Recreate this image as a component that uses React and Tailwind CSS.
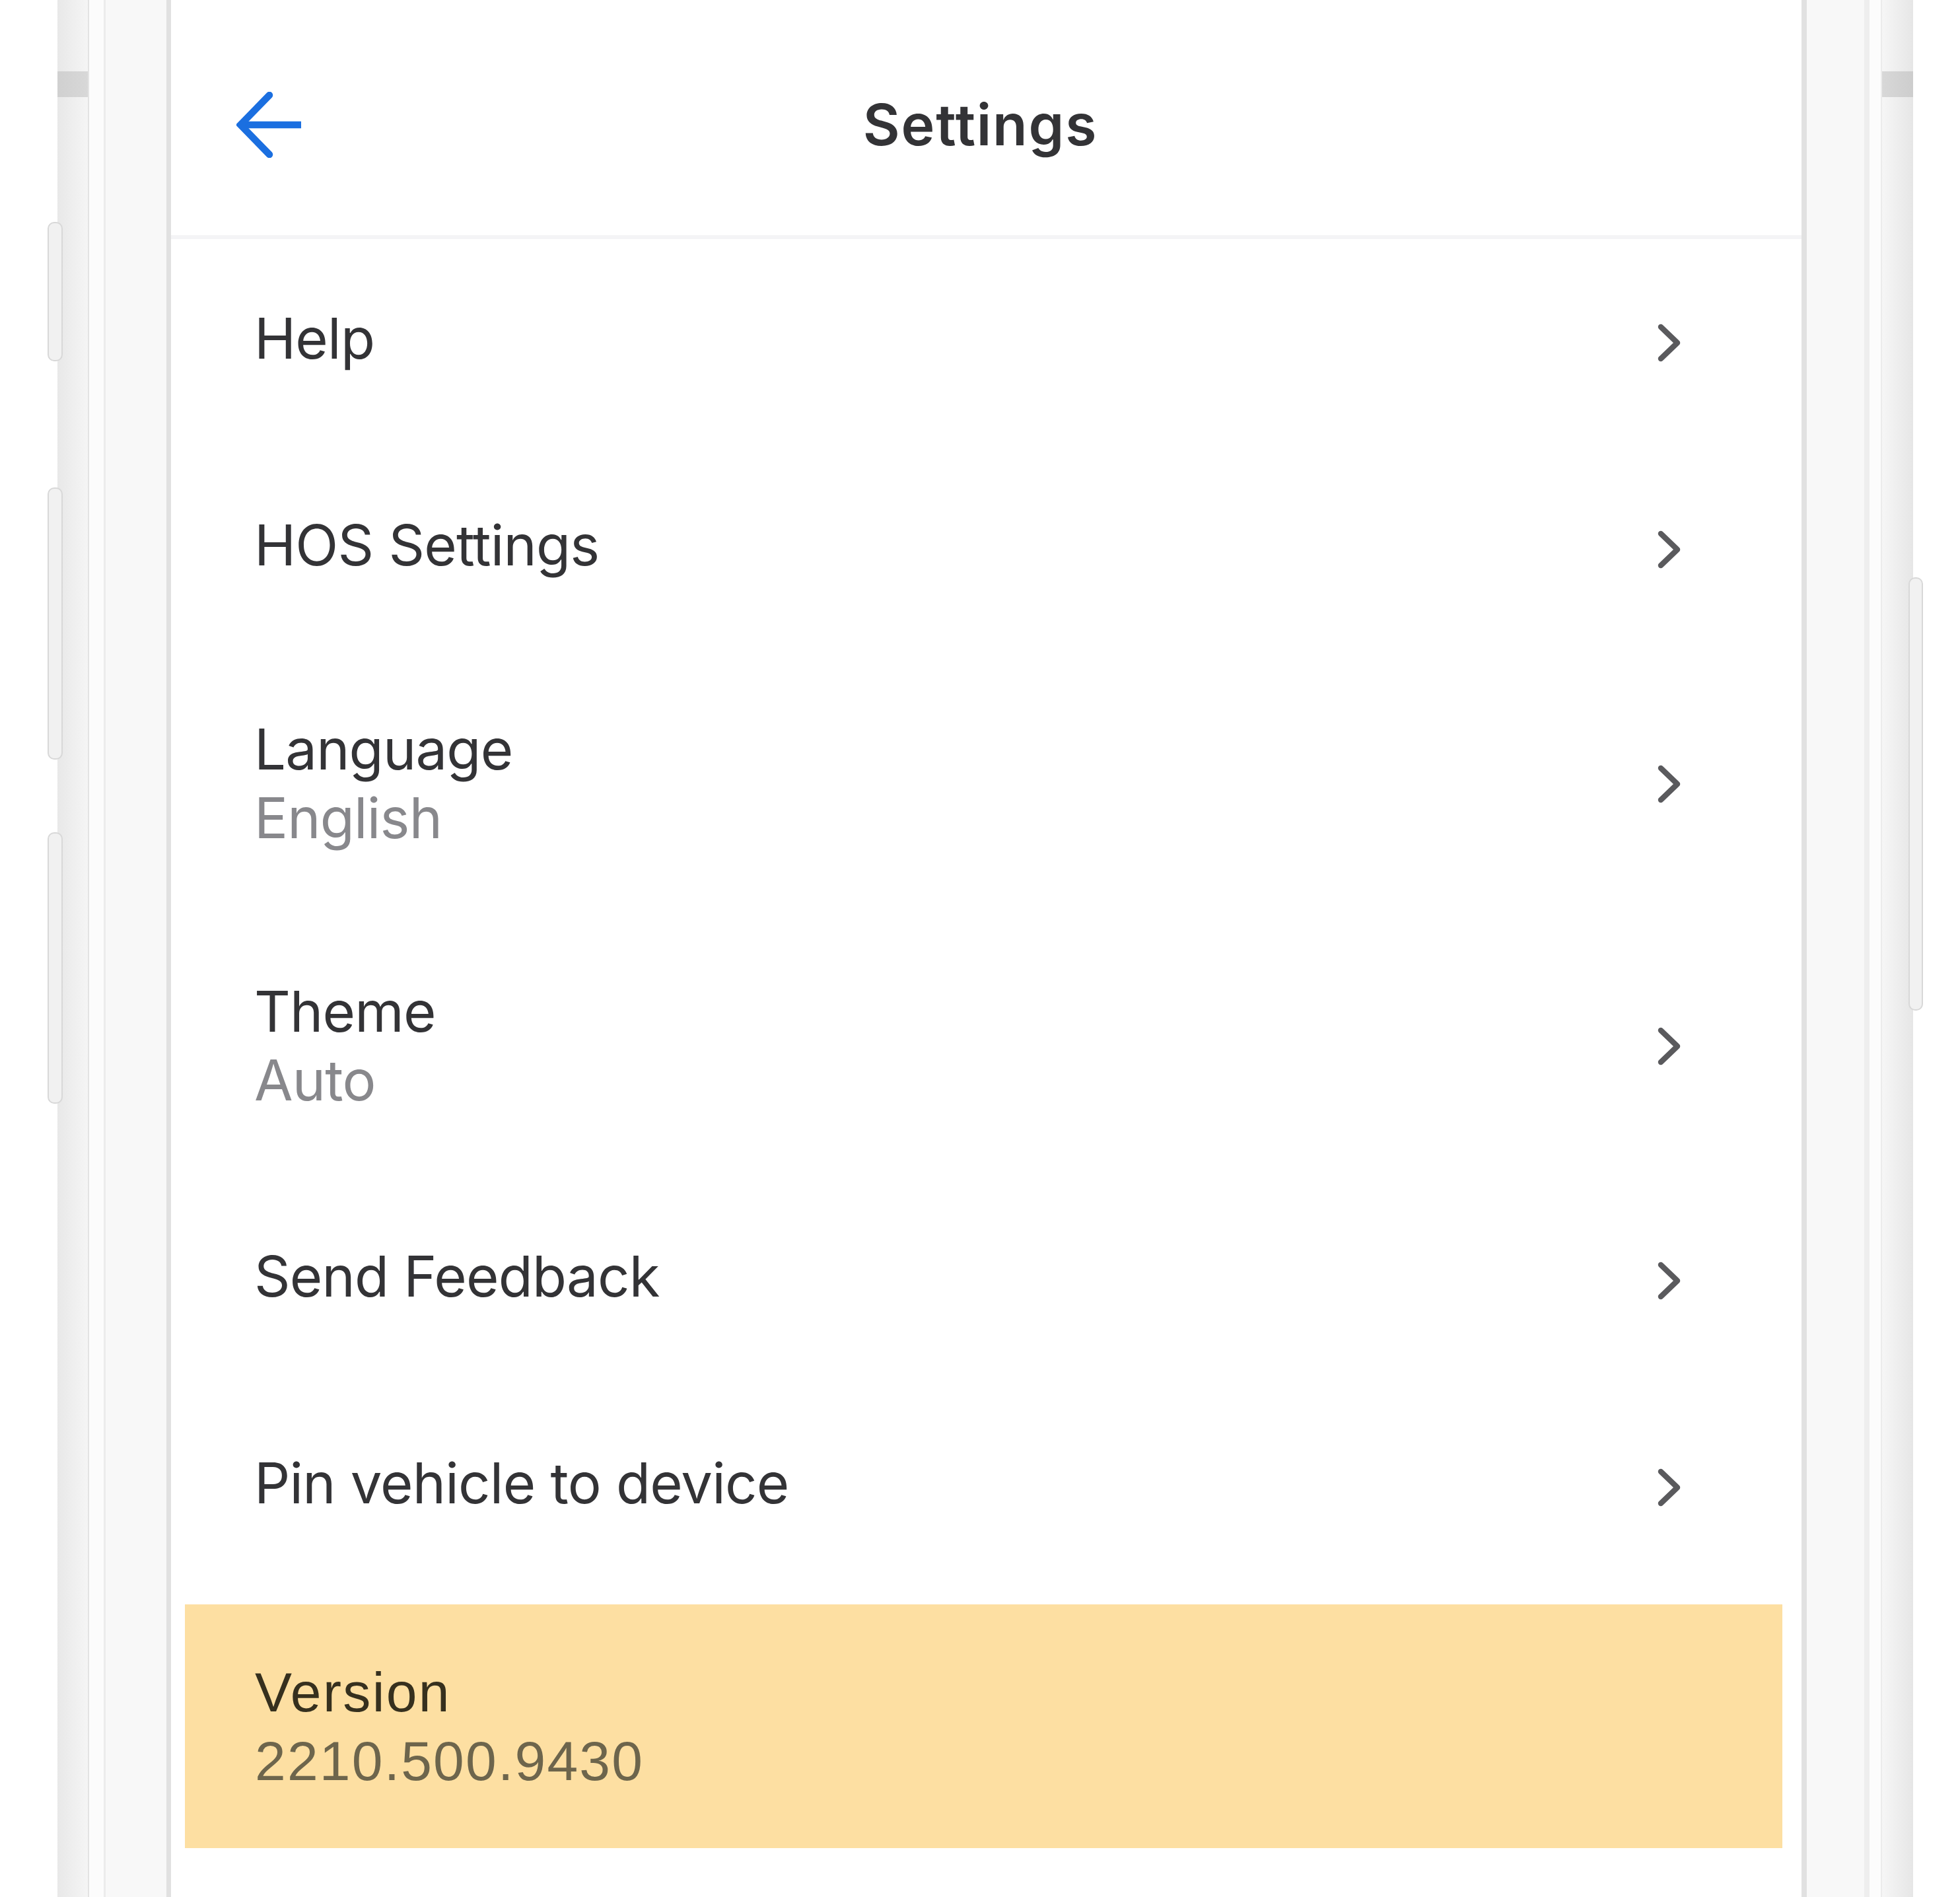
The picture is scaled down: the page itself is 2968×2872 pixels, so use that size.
import React from "react";

function Chevron() {
  return (
    <svg width="44" height="70" viewBox="0 0 44 70" className="shrink-0">
      <path d="M11 11 L36 35 L11 59" fill="none" stroke="#5a5a5d" strokeWidth="8.5" strokeLinecap="round" strokeLinejoin="round" />
    </svg>
  );
}

function BackArrow() {
  return (
    <svg width="100" height="100" viewBox="0 0 100 100" className="shrink-0">
      <path d="M98 50 H8" fill="none" stroke="#1b6fe0" strokeWidth="10.5" />
      <path d="M50 5 L6 50 L50 95" fill="none" stroke="#1b6fe0" strokeWidth="10.5" strokeLinecap="round" strokeLinejoin="miter" />
    </svg>
  );
}

const rows = [
  { title: "Help", h: "h-[313px]" },
  { title: "HOS Settings", h: "h-[313px]" },
  { title: "Language", sub: "English", h: "h-[397px]" },
  { title: "Theme", sub: "Auto", h: "h-[397px]" },
  { title: "Send Feedback", h: "h-[313px]" },
  { title: "Pin vehicle to device", h: "h-[313px]" },
];

function Row({ title, sub, h }) {
  return (
    <div className={"flex items-center pl-[126px] pr-[180px] " + h}>
      <div className={"flex flex-1 flex-col " + (sub ? "" : "mb-[12px]")}>
        <span className="text-[85px] leading-[104px] tracking-[-0.8px] text-[#333336]">{title}</span>
        {sub && <span className="text-[85px] leading-[104px] tracking-[-0.8px] text-[#88888c]">{sub}</span>}
      </div>
      <Chevron />
    </div>
  );
}

export default function App() {
  return (
    <div className="flex h-[2872px] w-[2968px] overflow-hidden bg-white font-['Inter',sans-serif]">
      <div className="w-[87px] shrink-0 bg-white" />
      {/* left bezel */}
      <div className="relative w-[46px] shrink-0 bg-gradient-to-r from-[#e8e8e8] to-[#f5f5f5]">
        <div className="mt-[108px] h-[39px] bg-gradient-to-r from-[#d0d0d0] to-[#d8d8d8]" />
        <div className="absolute left-[-15px] top-[336px] h-[211px] w-[23px] rounded-[10px] border-2 border-[#d8d8d8] bg-[#f1f1f1]" />
        <div className="absolute left-[-15px] top-[738px] h-[412px] w-[23px] rounded-[10px] border-2 border-[#d8d8d8] bg-[#f1f1f1]" />
        <div className="absolute left-[-15px] top-[1260px] h-[411px] w-[23px] rounded-[10px] border-2 border-[#d8d8d8] bg-[#f1f1f1]" />
      </div>
      <div className="w-[2px] shrink-0 bg-[#e3e3e3]" />
      <div className="w-[22px] shrink-0 bg-[#fcfcfc]" />
      <div className="w-[3px] shrink-0 bg-[#ececec]" />
      <div className="w-[92px] shrink-0 bg-[#f8f8f8]" />
      <div className="w-[7px] shrink-0 bg-[#e1e1e1]" />

      {/* content */}
      <div className="flex w-[2469px] shrink-0 flex-col bg-white">
        <div className="grid h-[362px] grid-cols-[1fr_auto_1fr] items-center border-b-[6px] border-[#f4f4f6] pt-[22px]">
          <div className="flex pl-[99px]">
            <BackArrow />
          </div>
          <div className="mr-[18px] text-[86px] font-semibold leading-[104px] tracking-[1.8px] text-[#333336]">Settings</div>
          <div />
        </div>
        {rows.map((r) => (
          <Row key={r.title} {...r} />
        ))}
        <div className="flex h-[397px] flex-col pb-[7px] pl-[21px] pr-[29px] pt-[21px]">
          <div className="flex flex-1 flex-col justify-center bg-[#fddfa2] pl-[106px] font-['Liberation_Sans',Arial,sans-serif]">
            <span className="text-[84px] leading-[104px] tracking-[2.4px] text-[#36301e]">Version</span>
            <span className="text-[84px] leading-[104px] tracking-[2.2px] text-[#6d654c]">2210.500.9430</span>
          </div>
        </div>
      </div>

      <div className="w-[8px] shrink-0 bg-[#e1e1e1]" />
      <div className="w-[87px] shrink-0 bg-[#f8f8f8]" />
      <div className="w-[8px] shrink-0 bg-[#eeeeee]" />
      <div className="w-[17px] shrink-0 bg-[#fcfcfc]" />
      <div className="w-[2px] shrink-0 bg-[#ececec]" />
      {/* right bezel */}
      <div className="relative w-[47px] shrink-0 bg-gradient-to-r from-[#f6f6f6] to-[#e6e6e6]">
        <div className="mt-[108px] h-[39px] bg-gradient-to-r from-[#d8d8d8] to-[#cdcdcd]" />
        <div className="absolute left-[40px] top-[874px] h-[656px] w-[22px] rounded-[10px] border-2 border-[#d8d8d8] bg-[#f1f1f1]" />
      </div>
      <div className="w-[71px] shrink-0 bg-white" />
    </div>
  );
}
